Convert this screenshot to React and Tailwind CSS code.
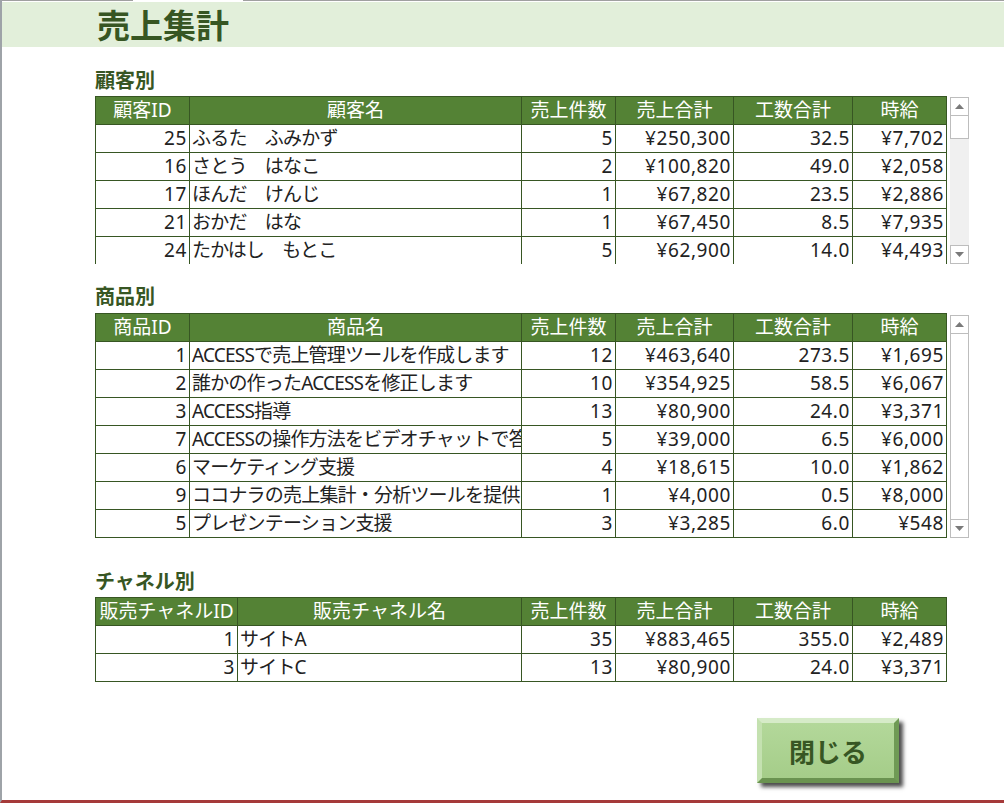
const customers = [
  ['25', 'ふるた　ふみかず', '5', '¥250,300', '32.5', '¥7,702'],
  ['16', 'さとう　はなこ', '2', '¥100,820', '49.0', '¥2,058'],
  ['17', 'ほんだ　けんじ', '1', '¥67,820', '23.5', '¥2,886'],
  ['21', 'おかだ　はな', '1', '¥67,450', '8.5', '¥7,935'],
  ['24', 'たかはし　もとこ', '5', '¥62,900', '14.0', '¥4,493'],
];

const products = [
  ['1', 'ACCESSで売上管理ツールを作成します', '12', '¥463,640', '273.5', '¥1,695'],
  ['2', '誰かの作ったACCESSを修正します', '10', '¥354,925', '58.5', '¥6,067'],
  ['3', 'ACCESS指導', '13', '¥80,900', '24.0', '¥3,371'],
  ['7', 'ACCESSの操作方法をビデオチャットで答えます', '5', '¥39,000', '6.5', '¥6,000'],
  ['6', 'マーケティング支援', '4', '¥18,615', '10.0', '¥1,862'],
  ['9', 'ココナラの売上集計・分析ツールを提供します', '1', '¥4,000', '0.5', '¥8,000'],
  ['5', 'プレゼンテーション支援', '3', '¥3,285', '6.0', '¥548'],
];

const channels = [
  ['1', 'サイトA', '35', '¥883,465', '355.0', '¥2,489'],
  ['3', 'サイトC', '13', '¥80,900', '24.0', '¥3,371'],
];

const colsA = ['w-[94px]', 'w-[332px]', 'w-[94px]', 'w-[118px]', 'w-[119px]', 'w-[94px]'];
const colsB = ['w-[142px]', 'w-[284px]', 'w-[94px]', 'w-[118px]', 'w-[119px]', 'w-[94px]'];

// header cells are centred, names left, numbers right (slightly wider spacing like Meiryo)
const Cell = ({ width, align, children, head }) => {
  let look = 'pl-[2px] tracking-[-0.8px]';
  if (head) look = 'text-center text-white';
  else if (align === 'text-right') look = 'text-right pr-[2px] tracking-[0.6px]';
  return (
    <div
      className={`${width} shrink-0 h-[28px] border-r border-b border-[#375623] leading-[27px] whitespace-nowrap overflow-hidden ${look}`}
    >
      {children}
    </div>
  );
};

const SummaryTable = ({ headers, rows, cols, bodyHeight }) => (
  <div className="w-[852px] border-l border-t border-[#375623] text-[19px] text-[#222]">
    <div className="flex bg-[#548235]">
      {headers.map((h, i) => (
        <Cell key={h} width={cols[i]} head>
          {h}
        </Cell>
      ))}
    </div>
    <div className={`${bodyHeight} overflow-hidden`}>
      {rows.map((r) => (
        <div key={r[0]} className="flex bg-white">
          {r.map((v, i) => (
            <Cell key={i} width={cols[i]} align={i === 1 ? 'text-left' : 'text-right'}>
              {v}
            </Cell>
          ))}
        </div>
      ))}
    </div>
  </div>
);

const Arrow = ({ down }) => (
  <div className="h-[19px] w-[19px] border border-[#bdbdbd] bg-white flex items-center justify-center">
    <svg width="9" height="5" viewBox="0 0 9 5">
      <polygon points={down ? '0,0 9,0 4.5,5' : '0,5 9,5 4.5,0'} fill="#7a7a7a" />
    </svg>
  </div>
);

const Scrollbar = ({ height, full }) => (
  <div className={`${height} w-[19px] flex flex-col bg-[#f0f0f0]`}>
    <Arrow />
    {full ? (
      <div className="flex-1 border-x border-[#bdbdbd] bg-white" />
    ) : (
      <>
        <div className="h-[23px] border-x border-b border-[#bdbdbd] bg-white" />
        <div className="flex-1" />
      </>
    )}
    <Arrow down />
  </div>
);

const Label = ({ children, className }) => (
  <div className={`h-[24px] leading-[24px] text-[20px] font-bold text-[#375623] ${className}`}>
    {children}
  </div>
);

export default function App() {
  const tail = ['売上件数', '売上合計', '工数合計', '時給'];
  return (
    <div className="relative w-[1004px] h-[803px] overflow-hidden bg-white border-l-2 border-l-[#9ea3a8] border-b-[3px] border-b-[#a53a3a] font-['Noto_Sans','Noto_Sans_CJK_JP',sans-serif]">
      <div className="flex h-[2px]">
        <div className="w-[131px] border-t border-[#a0a0a0]" />
        <div className="w-[110px]" />
        <div className="flex-1 border-t border-[#a0a0a0]" />
      </div>
      <div className="h-[45px] bg-[#e2efda] flex items-center pl-[95px]">
        <h1 className="text-[33px] font-bold leading-none text-[#375623] font-['Noto_Sans_CJK_JP',sans-serif]">
          売上集計
        </h1>
      </div>

      <div className="pl-[93px]">
        <Label className="mt-[22px]">顧客別</Label>
        <div className="mt-[3px] flex items-start gap-[3px]">
          <SummaryTable
            headers={['顧客ID', '顧客名', ...tail]}
            rows={customers}
            cols={colsA}
            bodyHeight="h-[139px]"
          />
          <div className="mt-[1px]">
            <Scrollbar height="h-[167px]" />
          </div>
        </div>

        <Label className="mt-[21px]">商品別</Label>
        <div className="mt-[4px] flex items-start gap-[3px]">
          <SummaryTable
            headers={['商品ID', '商品名', ...tail]}
            rows={products}
            cols={colsA}
            bodyHeight="h-[196px]"
          />
          <div className="mt-[2px]">
            <Scrollbar height="h-[223px]" full />
          </div>
        </div>

        <Label className="mt-[32px]">チャネル別</Label>
        <div className="mt-[3px]">
          <SummaryTable
            headers={['販売チャネルID', '販売チャネル名', ...tail]}
            rows={channels}
            cols={colsB}
            bodyHeight="h-[56px]"
          />
        </div>

        <button className="ml-[662px] mt-[36px] w-[142px] h-[65px] bg-gradient-to-b from-[#b3d89a] to-[#a5cd89] border-[5px] border-t-[#d6ebc8] border-l-[#c4e1b0] border-r-[#6f9a55] border-b-[#6a9350] shadow-[4px_4px_4px_rgba(0,0,0,0.7)] text-[26px] font-bold text-[#375623] leading-none font-['Noto_Sans_CJK_JP',sans-serif]">
          閉じる
        </button>
      </div>
    </div>
  );
}
